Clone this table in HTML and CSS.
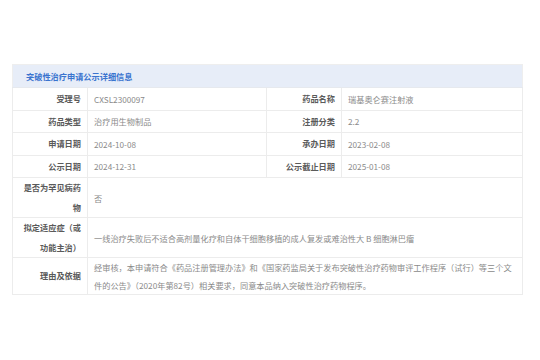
FILE: index.html
```html
<!DOCTYPE html>
<html lang="zh-CN">
<head>
<meta charset="utf-8">
<title>突破性治疗申请公示详细信息</title>
<link rel="stylesheet" href="styles.css">
</head>
<body>
<div class="page">
  <table class="info">
    <colgroup>
      <col class="c-label">
      <col class="c-value1">
      <col class="c-label">
      <col class="c-value2">
    </colgroup>
    <thead>
      <tr class="head-row"><th colspan="4" class="title">突破性治疗申请公示详细信息</th></tr>
    </thead>
    <tbody>
      <tr>
        <td class="label">受理号</td><td class="value">CXSL2300097</td>
        <td class="label">药品名称</td><td class="value">瑞基奥仑赛注射液</td>
      </tr>
      <tr>
        <td class="label">药品类型</td><td class="value">治疗用生物制品</td>
        <td class="label">注册分类</td><td class="value">2.2</td>
      </tr>
      <tr>
        <td class="label">申请日期</td><td class="value">2024-10-08</td>
        <td class="label">承办日期</td><td class="value">2023-02-08</td>
      </tr>
      <tr>
        <td class="label">公示日期</td><td class="value">2024-12-31</td>
        <td class="label">公示截止日期</td><td class="value">2025-01-08</td>
      </tr>
      <tr>
        <td class="label">是否为罕见病药物</td><td class="value" colspan="3">否</td>
      </tr>
      <tr>
        <td class="label">拟定适应症（或功能主治）</td><td class="value" colspan="3">一线治疗失败后不适合高剂量化疗和自体干细胞移植的成人复发或难治性大 B 细胞淋巴瘤</td>
      </tr>
      <tr>
        <td class="label">理由及依据</td><td class="value" colspan="3">经审核，本申请符合《药品注册管理办法》和《国家药监局关于发布突破性治疗药物审评工作程序（试行）等三个文件的公告》（2020年第82号）相关要求，同意本品纳入突破性治疗药物程序。</td>
      </tr>
    </tbody>
  </table>
</div>
</body>
</html>
```
FILE: styles.css
```css
html, body {
  margin: 0;
  padding: 0;
  background: #ffffff;
}
.page {
  padding: 64px 18px 0 12px;
  font-family: "Noto Sans CJK SC", "Noto Sans", sans-serif;
}
.info {
  width: 510px;
  border-collapse: collapse;
  table-layout: fixed;
  font-size: 8.2px;
  border: 1px solid #eeeeee;
}
.c-label { width: 75px; }
.c-value1 { width: 179px; }
.c-value2 { width: 181px; }
.head-row { height: 23px; }
.title {
  background: #e7edf8;
  color: #3a74cf;
  font-weight: 700;
  text-align: left;
  padding: 0 13px;
  line-height: 20px;
  border-bottom: 1px solid #e6e9ee;
}
.info tbody tr { height: 22.5px; }
.info td {
  border: 1px solid #ececec;
  padding: 0 6px;
  vertical-align: middle;
}
.info td.value { padding: 0 4px 0 6px; }
.label {
  text-align: right;
  font-weight: 700;
  color: #5a5a5a;
  line-height: 19.5px;
}
.value {
  text-align: left;
  color: #8a8a8a;
  line-height: 18px;
}
```
